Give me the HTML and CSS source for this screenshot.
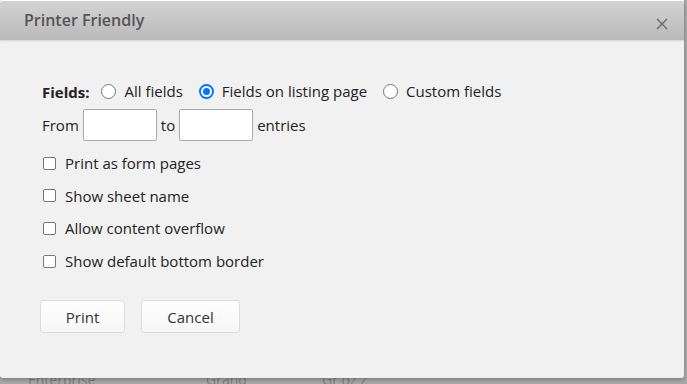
FILE: index.html
```html
<!DOCTYPE html>
<html>
<head>
<meta charset="utf-8">
<link rel="stylesheet" href="styles.css">
</head>
<body>
<div class="backdrop">
  <div class="bg-text">
    <span class="bt1">Enterprise</span><span class="bt2">Grand</span><span class="bt3">Gr oz z</span>
  </div>
  <div class="dialog">
    <div class="header">
      <span class="title">Printer Friendly</span>
      <svg class="close" width="12" height="12" viewBox="0 0 12 12"><path d="M1 1 L11 11 M11 1 L1 11" stroke="#666" stroke-width="1.3" fill="none"/></svg>
    </div>
    <div class="body">
      <div class="row fields">
        <span class="label">Fields:</span>
        <label class="opt"><span class="radio"></span>All fields</label>
        <label class="opt"><span class="radio on"></span>Fields on listing page</label>
        <label class="opt"><span class="radio"></span>Custom fields</label>
      </div>
      <div class="row range">
        <span>From</span><span class="input"></span><span>to</span><span class="input"></span><span>entries</span>
      </div>
      <div class="checks">
        <label class="check"><span class="box"></span>Print as form pages</label>
        <label class="check"><span class="box"></span>Show sheet name</label>
        <label class="check"><span class="box"></span>Allow content overflow</label>
        <label class="check"><span class="box"></span>Show default bottom border</label>
      </div>
      <div class="buttons">
        <span class="btn print">Print</span>
        <span class="btn cancel">Cancel</span>
      </div>
    </div>
  </div>
</div>
</body>
</html>
```
FILE: styles.css
```css
* { box-sizing: border-box; }
html, body { margin: 0; padding: 0; }
body {
  width: 687px;
  height: 384px;
  overflow: hidden;
  background: #a9a9a9;
  font-family: "Open Sans", "Noto Sans", sans-serif;
  color: #222;
}
.backdrop {
  position: relative;
  width: 687px;
  height: 384px;
}
.bg-text {
  position: absolute;
  left: 28px;
  top: 370px;
  font-size: 14px;
  color: #808080;
  display: flex;
}
.bt1 { width: 178px; }
.bt2 { width: 116px; }
.dialog {
  position: absolute;
  left: 0;
  top: 0;
  width: 684px;
  height: 378px;
  background: #f1f1f1;
  border-radius: 0 0 3px 3px;
  box-shadow: 0 2px 4px rgba(0,0,0,0.25);
  display: flex;
  flex-direction: column;
}
.header {
  height: 40px;
  background: linear-gradient(#d3d3d3, #b9b9b9);
  border-top: 1px solid #fff;
  border-radius: 3px 3px 0 0;
  display: flex;
  align-items: center;
  justify-content: space-between;
  padding: 0 16px 0 24px;
  box-shadow: 0 1px 2px rgba(0,0,0,0.12);
}
.title {
  font-size: 16px;
  font-weight: 600;
  color: #555;
  margin-top: -2px;
}
.close { margin-top: 6px; }
.body {
  padding: 36px 0 0 42px;
  font-size: 15px;
  color: #222;
}
.row { display: flex; align-items: center; }
.fields { height: 30px; }
.label { font-weight: 700; margin-right: 12px; margin-top: 2px; }
.opt { display: flex; align-items: center; margin-right: 16px; }
.radio {
  width: 15px; height: 15px;
  border: 1px solid #767676;
  border-radius: 50%;
  background: #fff;
  margin-right: 8px;
  display: inline-block;
  position: relative;
}
.radio.on { border: 2px solid #0075ff; }
.radio.on::after {
  content: "";
  position: absolute;
  left: 2px; top: 2px;
  width: 7px; height: 7px;
  border-radius: 50%;
  background: #0075ff;
}
.range { margin-top: 3px; height: 32px; gap: 4px; }
.input {
  width: 74px; height: 32px;
  background: #fff;
  border: 1px solid #aaa;
  border-radius: 2px;
}
.checks { display: flex; flex-direction: column; margin-top: 6px; }
.check { display: flex; align-items: center; height: 32.6px; }
.box {
  width: 13px; height: 13px;
  border: 1px solid #767676;
  border-radius: 2px;
  background: #fff;
  margin: 0 9px 0 1px;
}
.buttons { display: flex; gap: 16px; margin-top: 23px; margin-left: -2px; }
.btn {
  height: 33px;
  display: flex; align-items: center; justify-content: center;
  background: linear-gradient(#fefefe, #f6f6f6);
  border: 1px solid #dcdcdc;
  border-radius: 3px;
  color: #333;
  font-size: 15px;
}
.print { width: 85px; }
.cancel { width: 99px; }
```
